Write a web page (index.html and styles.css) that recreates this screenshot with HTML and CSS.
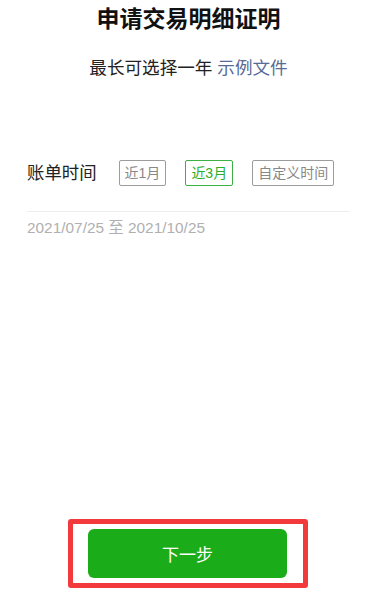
FILE: index.html
```html
<!DOCTYPE html>
<html lang="zh-CN">
<head>
    <meta charset="UTF-8">
    <meta name="viewport" content="width=device-width, initial-scale=1.0">
    <title>申请交易明细证明</title>
    <link rel="stylesheet" href="styles.css">
</head>
<body>
    <div class="page">
        <h1 class="title">申请交易明细证明</h1>
        <p class="subtitle">最长可选择一年 <a href="#" class="link">示例文件</a></p>

        <div class="period-row">
            <span class="period-label">账单时间</span>
            <div class="chips">
                <span class="chip">近1月</span>
                <span class="chip active">近3月</span>
                <span class="chip">自定义时间</span>
            </div>
        </div>
        <div class="divider"></div>
        <div class="range">2021/07/25 至 2021/10/25</div>

        <div class="footer">
            <div class="highlight">
                <button class="next-btn">下一步</button>
            </div>
        </div>
    </div>
</body>
</html>
```

FILE: styles.css
```css
body {
    margin: 0;
    background: #fff;
    font-family: "Liberation Sans", "Noto Sans CJK SC", sans-serif;
    color: #222;
}
.page {
    display: flex;
    flex-direction: column;
    min-height: 600px;
    box-sizing: border-box;
    padding-bottom: 12px;
}
.title {
    margin: 4px 0 0;
    font-size: 23px;
    line-height: 30px;
    font-weight: bold;
    text-align: center;
    color: #111;
}
.subtitle {
    margin: 22px 0 0;
    font-size: 17.6px;
    line-height: 24px;
    text-align: center;
    color: #222;
}
.link {
    color: #576b95;
    text-decoration: none;
}
.period-row {
    display: flex;
    align-items: center;
    margin-top: 80px;
    padding-left: 27px;
}
.period-label {
    font-size: 17.4px;
    line-height: 26px;
    margin-right: 22px;
}
.chips {
    display: flex;
    gap: 19px;
}
.chip {
    height: 26px;
    line-height: 24px;
    box-sizing: border-box;
    padding: 0 5px;
    border: 1px solid #9c9c9c;
    border-radius: 2px;
    font-size: 14px;
    color: #888;
}
.chip.active {
    border-color: #3cb043;
    color: #2aae2a;
}
.divider {
    height: 1px;
    background: #eee;
    margin: 25px 27px 0;
    width: 323px;
}
.range {
    margin-top: 6px;
    padding-left: 27px;
    font-size: 15.4px;
    line-height: 20px;
    color: #b0b0b0;
}
.footer {
    margin-top: auto;
    display: flex;
    justify-content: center;
    padding-right: 1px;
}
.highlight {
    border: 5px solid #f2393c;
    border-radius: 3px;
    padding: 5px 16px 5px 15px;
    width: 199px;
}
.next-btn {
    display: block;
    width: 199px;
    height: 49px;
    border: none;
    border-radius: 6px;
    background: #1aad19;
    color: #fff;
    font-family: "Liberation Sans", "Noto Sans CJK SC", sans-serif;
    font-size: 17px;
}
```
